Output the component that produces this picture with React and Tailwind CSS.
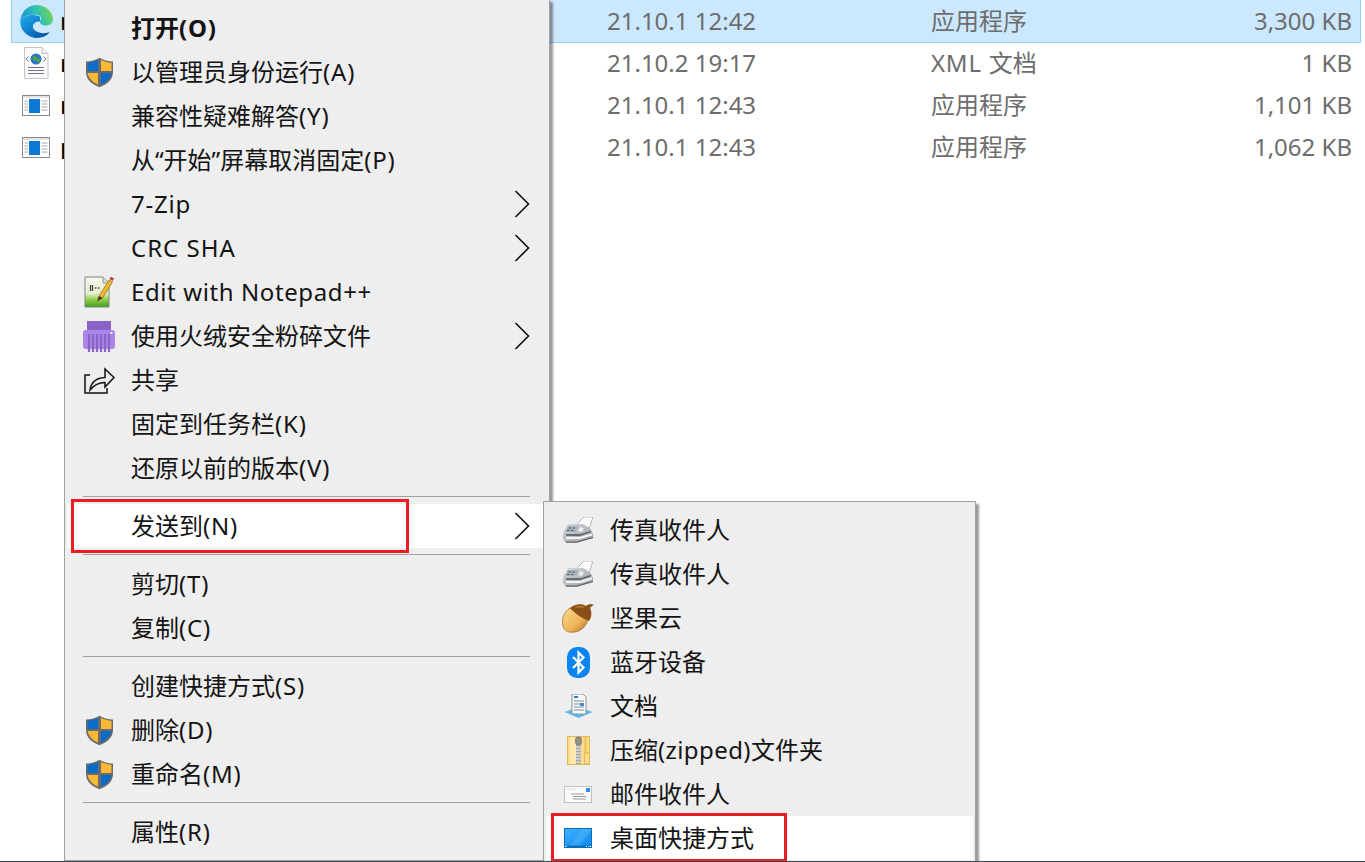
import React from "react";

function EdgeIcon() {
  return (
    <svg width="33" height="33" viewBox="0 0 32 32">
      <defs>
        <linearGradient id="edgeTop" x1="0" y1="0.6" x2="1" y2="0.3">
          <stop offset="0" stopColor="#1a8fd8" />
          <stop offset="0.5" stopColor="#2cc0b8" />
          <stop offset="1" stopColor="#7ad84a" />
        </linearGradient>
        <linearGradient id="edgeBody" x1="0" y1="0.2" x2="0.8" y2="1">
          <stop offset="0" stopColor="#1ea6e6" />
          <stop offset="0.55" stopColor="#0f78c8" />
          <stop offset="1" stopColor="#0b4f9a" />
        </linearGradient>
      </defs>
      <path d="M19 11C10 8 1.500 11 .3 15C-.5 24 7 32 16 32C22 32 26 30 29 26C25 28 21 27.500 18 26.500C14 25 12 22.500 12.500 20C13 17.500 16 15.500 20 16Z" fill="url(#edgeBody)" />
      <path d="M.3 15C1.500 5.500 8.500 0 16 0C25 0 32 6.500 32 14C32 18 28.500 20 25 20C22 20 19.500 18.500 19.500 16.500C19.500 15 20.500 14.500 20.500 13C20.500 11 18 9.500 14.500 9.500C7 9.500 1.500 11 .3 15Z" fill="url(#edgeTop)" />
    </svg>
  );
}

function XmlIcon() {
  return (
    <svg width="26" height="32" viewBox="0 0 26 32">
      <path d="M1.500 .5H19L25 6.500V31.500H1.500Z" fill="#fbfbfb" stroke="#c4c4c4" />
      <path d="M19 .5V6.500H25" fill="#eeeeee" stroke="#c4c4c4" />
      <circle cx="13" cy="12" r="5.500" fill="#2a78c8" />
      <path d="M10 8.500L14 10L13 14L10 13Z" fill="#58a83c" />
      <path d="M14 12L17 11L16.500 15L14 16Z" fill="#58a83c" />
      <path d="M5.500 9.500L3 12L5.500 14.500M20.500 9.500L23 12L20.500 14.500" fill="none" stroke="#777" />
      <path d="M5 20.500H21M5 23.500H21M5 26.500H21" stroke="#77708e" />
    </svg>
  );
}

function ExeIcon() {
  return (
    <svg width="28" height="21" viewBox="0 0 28 21">
      <rect x=".5" y=".5" width="27" height="20" fill="#fff" stroke="#8a8a8a" />
      <rect x="1" y="1" width="26" height="2" fill="#e4e4e4" />
      <rect x="7" y="4" width="11" height="14" fill="#0a78d4" />
      <path d="M2.500 6H6M2.500 9H6M2.500 12H6M2.500 15H6M19.500 6H25.500M19.500 9H25.500M19.500 12H25.500M19.500 15H25.500" stroke="#a8a8a8" />
    </svg>
  );
}

function ShieldIcon() {
  return (
    <svg width="29" height="31" viewBox="0 0 29 31">
      <path d="M14.500 .8C11 3 6 4.500 1 4.500V15C1 22.500 7 27.500 14.500 30.200C22 27.500 28 22.500 28 15V4.500C23 4.500 18 3 14.500 .8Z" fill="#6b6b6b" />
      <path d="M13 3C10 4.500 6 5.500 2.500 5.800V14H13Z" fill="#0a6cc8" />
      <path d="M16 3C19 4.500 23 5.500 26.500 5.800V14H16Z" fill="#fdb933" />
      <path d="M2.500 16H13V27.500C8 25.500 3.500 21.500 2.500 16Z" fill="#fdb933" />
      <path d="M26.500 16H16V27.500C21 25.500 25.500 21.500 26.500 16Z" fill="#0a6cc8" />
    </svg>
  );
}

function NotepadIcon() {
  return (
    <svg width="30" height="32" viewBox="0 0 30 32">
      <defs>
        <linearGradient id="nppPage" x1="0" y1="0" x2="0" y2="1">
          <stop offset="0" stopColor="#f6f6ec" />
          <stop offset="0.55" stopColor="#e6eed0" />
          <stop offset="0.75" stopColor="#8fd04a" />
          <stop offset="1" stopColor="#3e9e1e" />
        </linearGradient>
      </defs>
      <path d="M1 1H19L25 7V31H1Z" fill="url(#nppPage)" stroke="#7d8a78" />
      <path d="M19 1V7H25" fill="#d8d8d0" stroke="#9a9a90" />
      <path d="M6.500 15V9M8.500 15V9M11 12H12.500M14 12H15.500" stroke="#444" strokeWidth="1.3" />
      <path d="M13.500 25L15 20L25 4L28.500 6L18.500 22Z" fill="#f2b632" stroke="#8a6410" strokeWidth=".7" />
      <path d="M25.500 3L27 .8L30 2.600L28.800 5Z" fill="#b83a3a" />
      <path d="M13.500 25L15 20L18.500 22Z" fill="#40302a" />
    </svg>
  );
}

function ShredderIcon() {
  return (
    <svg width="32" height="31" viewBox="0 0 32 31">
      <rect x="4" y="0" width="24" height="10" fill="#8a63c9" />
      <rect x="0" y="9" width="32" height="19" rx="3" fill="#a986e8" />
      <path d="M6 13V31M10 13V31M14 13V31M18 13V31M22 13V31M26 13V31" stroke="#8a63c9" strokeWidth="2.200" />
      <rect x="27.500" y="11" width="2" height="2" fill="#f2ecff" />
    </svg>
  );
}

function ShareIcon() {
  return (
    <svg width="31" height="27" viewBox="0 0 31 27" fill="none" stroke="#111" strokeWidth="1.500">
      <path d="M6 8H1V26H23V21" />
      <path d="M6 23C7 15 12 11 21 10.500V2L30 10.500L21 20V15.500C15 15.500 10 18 6 23Z" />
    </svg>
  );
}

function ChevronIcon() {
  return (
    <svg width="16" height="28" viewBox="0 0 16 28" fill="none" stroke="#111" strokeWidth="1.600">
      <path d="M1.500 1L14.500 14L1.500 27" />
    </svg>
  );
}

function FaxIcon() {
  return (
    <svg width="31" height="27" viewBox="0 0 31 27">
      <defs>
        <linearGradient id="faxBody" x1="0" y1="0" x2="1" y2="1">
          <stop offset="0" stopColor="#d8dadc" />
          <stop offset="1" stopColor="#989ba0" />
        </linearGradient>
      </defs>
      <path d="M14 7L21 0H30L26 12Z" fill="#fafafa" stroke="#b8b8b8" />
      <path d="M5 7H20L27 11L30 17V21L14 26H3L0 22V16Z" fill="url(#faxBody)" />
      <path d="M5 9H16L13 15H2Z" fill="#aab4bc" />
      <path d="M5.500 11H8M9.500 11H12M4 13.500H6.500M8 13.500H10.500" stroke="#4a5a66" />
      <path d="M17 10L21 11.500L19 15L15 14Z" fill="#eceeef" />
      <path d="M3 18H17L28 14.500" fill="none" stroke="#4e5256" strokeWidth="1.300" />
      <path d="M3 21H17L29 17.500" fill="none" stroke="#f4f4f4" strokeWidth="2" />
      <path d="M3 25H14L30 20.500" fill="none" stroke="#55585c" />
    </svg>
  );
}

function AcornIcon() {
  return (
    <svg width="33" height="30" viewBox="0 0 33 30">
      <defs>
        <linearGradient id="nut" x1="0" y1="0" x2="1" y2="1">
          <stop offset="0" stopColor="#fbd98c" />
          <stop offset="0.6" stopColor="#eeb558" />
          <stop offset="1" stopColor="#a8681e" />
        </linearGradient>
      </defs>
      <path d="M8 5C2 9 -1 16 1 23C2 28 7 30 13 29C20 28 25 22 27 14Z" fill="url(#nut)" stroke="#8a5a1a" strokeWidth=".6" />
      <path d="M8 5C12 1 20 0 24 3C25 2 27 1 29 1L32 2C30 3 28 4.500 28 5C30 9 30 14 27 18C21 16 12 10 8 5Z" fill="#8a4f17" />
      <path d="M12 4C15 2.500 20 2 23 4.500C21 5 16 5 12 4Z" fill="#b5752c" />
    </svg>
  );
}

function BluetoothIcon() {
  return (
    <svg width="23" height="31" viewBox="0 0 23 31">
      <rect x="0" y="0" width="23" height="31" rx="10" fill="#0a84f0" />
      <path d="M6 10L16.500 20.500L11.500 25.500V5.500L16.500 10.500L6 21" fill="none" stroke="#fff" strokeWidth="2.200" />
    </svg>
  );
}

function DocIcon() {
  return (
    <svg width="29" height="24" viewBox="0 0 29 24">
      <path d="M14.500 13L28.500 18L14.500 24L.5 18Z" fill="#5db8ee" />
      <path d="M8 0H19L22 3V20H8Z" fill="#f8f8f8" stroke="#8a9098" />
      <path d="M10 3H14" stroke="#2a7fd0" strokeWidth="2" />
      <path d="M10 7H20M10 10H16M10 13H20M10 16H20" stroke="#7a8a9a" />
      <rect x="16" y="9" width="4" height="3" fill="#3a8fd8" />
    </svg>
  );
}

function ZipIcon() {
  return (
    <svg width="23" height="29" viewBox="0 0 23 29">
      <rect x=".5" y=".5" width="22" height="28" fill="#fbdc8c" stroke="#e3b84e" />
      <rect x="3" y="1" width="6" height="27" fill="#fdeab0" />
      <rect x="17" y="1" width="3" height="27" fill="#f0c868" />
      <rect x="9" y="1" width="5" height="27" fill="#a8a8a0" />
      <path d="M9 8H14M9 11H14M9 14H14M9 17H14M9 20H14M9 23H14M9 26H14" stroke="#f4f4f0" strokeWidth="1.200" />
      <rect x="8.500" y="1" width="6" height="8" rx="2.500" fill="#8f8f8a" stroke="#666" strokeWidth=".6" />
      <rect x="17.500" y="17" width="5" height="11" rx="1.500" fill="#fbdc8c" stroke="#e3b84e" />
    </svg>
  );
}

function MailIcon() {
  return (
    <svg width="28" height="17" viewBox="0 0 28 17">
      <rect x=".5" y=".5" width="27" height="16" fill="#fafafa" stroke="#c0c0c0" />
      <path d="M7 8H20M9 10.500H22M9 13H22" stroke="#9a9a9a" />
      <rect x="22" y="2" width="4" height="4" fill="#2a8fe8" />
      <path d="M2 3H12" stroke="#dcdcdc" />
    </svg>
  );
}

function DesktopIcon() {
  return (
    <svg width="28" height="20" viewBox="0 0 28 20">
      <defs>
        <linearGradient id="desk" x1="0" y1="0" x2="1" y2="1">
          <stop offset="0" stopColor="#3fb0ff" />
          <stop offset="1" stopColor="#0a8af0" />
        </linearGradient>
      </defs>
      <rect x="0" y="0" width="28" height="20" fill="#0b6fb8" />
      <rect x="1" y="1" width="26" height="16.500" fill="url(#desk)" />
      <path d="M6 17.500L18 1H27V3L16 17.500Z" fill="#ffffff" opacity=".12" />
      <path d="M1 18.500H2.500M22 18.500H23M24.500 18.500H25.500M26 18.500H27" stroke="#fff" />
    </svg>
  );
}

const files = [
  { icon: <EdgeIcon />, name: "msedge.exe", date: "21.10.1 12:42", type: "应用程序", size: "3,300 KB", selected: true },
  { icon: <XmlIcon />, name: "msedge.VisualElementsManifest.xml", date: "21.10.2 19:17", type: "XML 文档", size: "1 KB" },
  { icon: <ExeIcon />, name: "msedge_proxy.exe", date: "21.10.1 12:43", type: "应用程序", size: "1,101 KB" },
  { icon: <ExeIcon />, name: "pwahelper.exe", date: "21.10.1 12:43", type: "应用程序", size: "1,062 KB" },
];

const menuItems = [
  { label: "打开(O)", bold: true },
  { label: "以管理员身份运行(A)", icon: <ShieldIcon /> },
  { label: "兼容性疑难解答(Y)" },
  { label: "从“开始”屏幕取消固定(P)" },
  { label: "7-Zip", arrow: true },
  { label: "CRC SHA", arrow: true, latin: "tracking-[1px]" },
  { label: "Edit with Notepad++", icon: <NotepadIcon />, latin: "tracking-[0.6px]" },
  { label: "使用火绒安全粉碎文件", icon: <ShredderIcon />, arrow: true },
  { label: "共享", icon: <ShareIcon /> },
  { label: "固定到任务栏(K)" },
  { label: "还原以前的版本(V)" },
  { separator: true },
  { label: "发送到(N)", arrow: true, active: true },
  { separator: true },
  { label: "剪切(T)" },
  { label: "复制(C)" },
  { separator: true },
  { label: "创建快捷方式(S)" },
  { label: "删除(D)", icon: <ShieldIcon /> },
  { label: "重命名(M)", icon: <ShieldIcon /> },
  { separator: true },
  { label: "属性(R)" },
];

const sendToItems = [
  { label: "传真收件人", icon: <FaxIcon /> },
  { label: "传真收件人", icon: <FaxIcon /> },
  { label: "坚果云", icon: <AcornIcon /> },
  { label: "蓝牙设备", icon: <BluetoothIcon /> },
  { label: "文档", icon: <DocIcon /> },
  { label: "压缩(zipped)文件夹", icon: <ZipIcon />, latin: "tracking-[0.4px]" },
  { label: "邮件收件人", icon: <MailIcon /> },
  { label: "桌面快捷方式", icon: <DesktopIcon />, active: true },
];

// Latin runs are a bit tighter than the original UI font, so they get their own tracking
function Label({ text, latin = "tracking-[0.8px]" }) {
  return text.split(/([\x20-\x7e]+)/).map((part, i) =>
    i % 2 === 1 ? (
      <span key={i} className={latin}>
        {part}
      </span>
    ) : (
      part
    )
  );
}

function MenuRow({ item }) {
  if (item.separator) {
    return (
      <div className="h-[14px] pt-[6px] pl-[16px] pr-[17px]">
        <div className="h-px bg-[#a0a0a0]" />
      </div>
    );
  }
  return (
    <div className={`flex h-11 items-center ${item.active ? "bg-white" : ""}`}>
      <div className="flex w-16 shrink-0 items-center justify-center">{item.icon}</div>
      <span className={item.bold ? "font-bold" : ""}>
        <Label text={item.label} latin={item.latin} />
      </span>
      {item.arrow && (
        <div className="ml-auto mr-[17px] flex">
          <ChevronIcon />
        </div>
      )}
    </div>
  );
}

export default function App() {
  return (
    <div className="relative h-[862px] w-[1365px] overflow-hidden bg-white font-['Noto_Sans','Noto_Sans_CJK_SC',sans-serif] text-[24px] leading-none text-[#141414]">
      {/* file list behind the menus */}
      <div className="flex flex-col pl-[11px] pr-[4px] text-[#6d6d6d]">
        {files.map((file) => (
          <div
            key={file.name}
            className={`flex items-center border pr-[8px] ${
              file.selected ? "-mb-px h-[43px] border-[#99d1ff] border-t-0 bg-[#cce8ff]" : "h-[42px] border-transparent"
            }`}
          >
            <div className="flex w-[48px] shrink-0 items-center justify-center">{file.icon}</div>
            <span className="w-[547px] shrink-0 truncate text-black">{file.name}</span>
            <span className="w-[324px] shrink-0">{file.date}</span>
            <span className="shrink-0">
              <Label text={file.type} />
            </span>
            <span className="ml-auto">{file.size}</span>
          </div>
        ))}
      </div>

      {/* main context menu */}
      <div className="absolute left-[64px] top-[-1px] h-[862px] w-[486px] border border-[#a0a0a0] bg-[#eeeeee] pt-[6px] pl-[2px] pr-[2px] shadow-[3px_3px_2px_rgba(0,0,0,0.4)]">
        {menuItems.map((item, i) => (
          <MenuRow key={i} item={item} />
        ))}
      </div>

      {/* send to submenu */}
      <div className="absolute left-[543px] top-[501px] h-[362px] w-[433px] border border-[#a0a0a0] bg-[#eeeeee] pt-[6px] pl-[2px] pr-[2px] shadow-[3px_3px_2px_rgba(0,0,0,0.4)]">
        {sendToItems.map((item, i) => (
          <MenuRow key={i} item={item} />
        ))}
      </div>

      {/* red annotation boxes */}
      <div className="absolute left-[71px] top-[499px] h-[54px] w-[338px] border-[3px] border-[#ed1c24]" />
      <div className="absolute left-[551px] top-[813px] h-[49px] w-[236px] border-[3px] border-[#ed1c24]" />

      <div className="absolute bottom-0 left-0 h-px w-full bg-[#3c4a54]" />
    </div>
  );
}
